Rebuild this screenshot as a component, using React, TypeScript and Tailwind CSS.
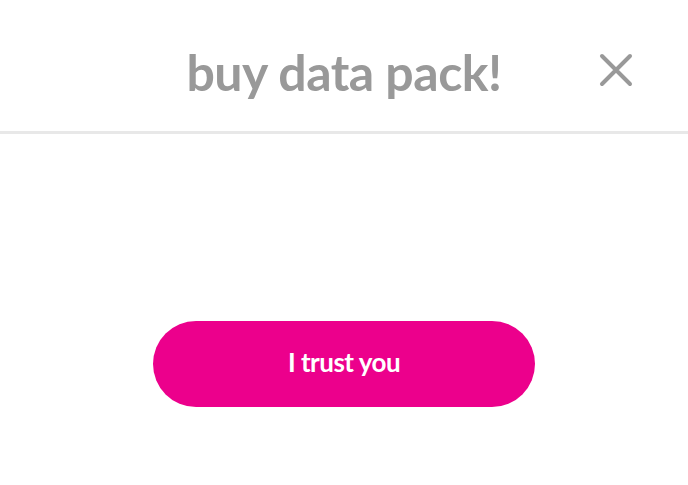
import React from "react";

export default function App() {
  return (
    <div className="w-[688px] h-[485px] bg-white overflow-hidden" style={{ fontFamily: "Lato, 'Noto Sans', sans-serif" }}>
      <header className="relative h-[134px] flex justify-center pt-[47px] border-b-[3px] border-[#e8e8e8]">
        <h1 className="text-[50px] font-bold text-[#999999] tracking-[-0.5px] leading-none">buy data pack!</h1>
        <button className="absolute right-[55px] top-[53px] w-[34px] h-[34px] flex items-center justify-center">
          <svg width="34" height="34" viewBox="0 0 34 34" fill="none" stroke="#999999" strokeWidth="4" strokeLinecap="round">
            <path d="M3 3 L31 31 M31 3 L3 31" />
          </svg>
        </button>
      </header>
      <div className="flex justify-center pt-[187px]">
        <button className="w-[382px] h-[86px] pb-[4px] rounded-full bg-[#ec008c] text-white text-[26px] font-bold tracking-[-0.5px]">
          I trust you
        </button>
      </div>
    </div>
  );
}
